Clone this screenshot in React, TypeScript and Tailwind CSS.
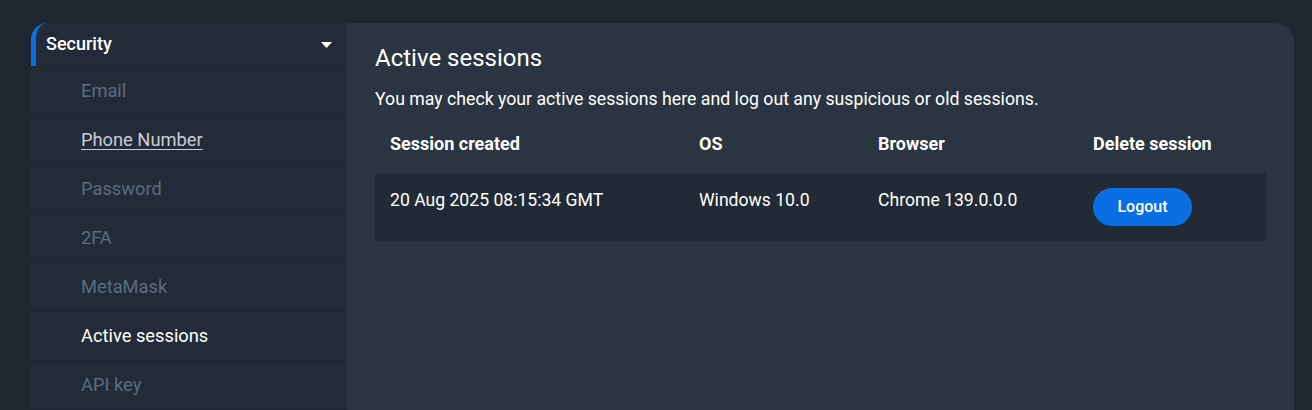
import React from "react";

const items = [
  { label: "Email", state: "dim" },
  { label: "Phone Number", state: "hover" },
  { label: "Password", state: "dim" },
  { label: "2FA", state: "dim" },
  { label: "MetaMask", state: "dim" },
  { label: "Active sessions", state: "active" },
  { label: "API key", state: "dim" },
];

export default function App() {
  return (
    <div
      className="w-full h-[410px] overflow-hidden bg-[#1f2630] flex pt-[23px] pl-[31px] pr-[18px]"
      style={{ fontFamily: "Roboto, 'Noto Sans', sans-serif" }}
    >
      <aside className="w-[316px] shrink-0 flex flex-col">
        <div className="h-[43px] flex items-center justify-between bg-[#222b37] border-l-[5px] border-[#0b6fe4] rounded-tl-[16px] pl-[10px] pr-[15px]">
          <span className="text-[18px] font-medium text-white leading-[22px] -mt-[1px]">Security</span>
          <svg width="11" height="6" viewBox="0 0 11 6" className="mt-[1px]">
            <path d="M0 0 L11 0 L5.5 6 Z" fill="#ffffff" />
          </svg>
        </div>
        {items.map((it) => (
          <div
            key={it.label}
            className="h-[49px] shrink-0 flex items-center border-t border-[#1d252f] bg-[#222b37] pl-[50px]"
          >
            <span
              className={
                it.state === "active"
                  ? "text-[18.3px] text-white"
                  : it.state === "hover"
                  ? "text-[18.3px] text-[#c9ced4] underline underline-offset-[3px]"
                  : "text-[18.3px] text-[#5b6c80]"
              }
            >
              {it.label}
            </span>
          </div>
        ))}
      </aside>
      <main className="flex-1 bg-[#2a3541] rounded-tr-[20px] pl-[28px] pr-[28px] pt-[21px]">
        <h1 className="text-[24px] font-normal text-white leading-[28px]">Active sessions</h1>
        <p className="mt-[15px] text-[17.7px] text-white leading-[24px]">
          You may check your active sessions here and log out any suspicious or old sessions.
        </p>
        <table className="mt-[2px] w-full table-fixed border-collapse text-white text-[17.6px]">
          <thead>
            <tr className="h-[60px]">
              <th className="text-left text-[18px] font-bold pl-[15px] w-[324px]">Session created</th>
              <th className="text-left text-[18px] font-bold w-[179px]">OS</th>
              <th className="text-left text-[18px] font-bold w-[215px]">Browser</th>
              <th className="text-left text-[18px] font-bold">Delete session</th>
            </tr>
          </thead>
          <tbody>
            <tr className="bg-[#212a35] align-top">
              <td className="pl-[15px] pt-[15px] leading-[24px]">20 Aug 2025 08:15:34 GMT</td>
              <td className="pt-[15px] leading-[24px]">Windows 10.0</td>
              <td className="pt-[15px] leading-[24px]">Chrome 139.0.0.0</td>
              <td className="pt-[15px] pb-[15px]">
                <button className="block w-[99px] h-[38px] rounded-full bg-[#0a6fe3] text-white text-[16px] font-medium">
                  Logout
                </button>
              </td>
            </tr>
          </tbody>
        </table>
      </main>
    </div>
  );
}
